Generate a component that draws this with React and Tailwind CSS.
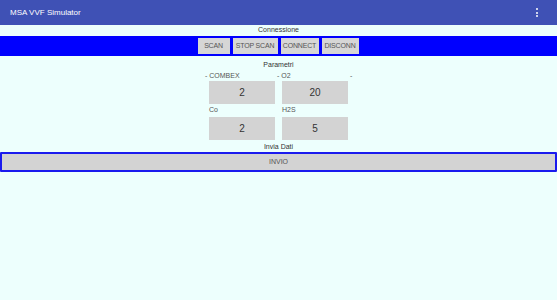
export default function App() {
  const font = { fontFamily: '"Liberation Sans", Arial, sans-serif' };
  const Btn = ({ children, w }) => (
    <div className={`h-[16px] ${w} bg-[#d6d6d6] flex items-center justify-center text-[7px] text-[#555] tracking-tight`}>
      {children}
    </div>
  );
  const Box = ({ children }) => (
    <div className="w-[66px] h-[23px] bg-[#d3d3d3] flex items-center justify-center text-[10px] text-[#333]">{children}</div>
  );
  return (
    <div className="w-[557px] h-[300px] bg-[#edfffd] flex flex-col" style={font}>
      <div className="h-[25px] bg-[#3f51b5] flex items-center justify-between pl-[10px] pr-[19px] shrink-0">
        <span className="text-white text-[8px]">MSA VVF Simulator</span>
        <div className="flex flex-col gap-[1.5px]">
          <div className="w-[2px] h-[2px] bg-white rounded-full" />
          <div className="w-[2px] h-[2px] bg-white rounded-full" />
          <div className="w-[2px] h-[2px] bg-white rounded-full" />
        </div>
      </div>
      <div className="h-[11px] flex items-center justify-center text-[7px] text-[#333]">Connessione</div>
      <div className="h-[20px] bg-[#0000ff] flex items-center justify-center gap-[3px] pr-[1px]">
        <Btn w="w-[32px]">SCAN</Btn>
        <Btn w="w-[45px]">STOP SCAN</Btn>
        <Btn w="w-[38px]">CONNECT</Btn>
        <Btn w="w-[37px]">DISCONN</Btn>
      </div>
      <div className="h-[16px] pt-[2px] flex items-center justify-center text-[7px] text-[#333]">Parametri</div>
      <div className="flex justify-center">
        <div className="w-[139px] flex flex-col text-[7px] text-[#555]">
          <div className="h-[9px] flex items-center whitespace-nowrap">
            <span className="w-[73px] shrink-0 -ml-[4px]">- COMBEX</span>
            <span className="w-[73px] shrink-0 -ml-[1px]">- O2</span>
            <span className="shrink-0">-</span>
          </div>
          <div className="flex gap-[7px]">
            <Box>2</Box>
            <Box>20</Box>
          </div>
          <div className="h-[13px] flex items-center">
            <span className="w-[73px]">Co</span>
            <span>H2S</span>
          </div>
          <div className="flex gap-[7px]">
            <Box>2</Box>
            <Box>5</Box>
          </div>
        </div>
      </div>
      <div className="h-[12px] pt-[3px] flex items-center justify-center text-[7px] text-[#333]">Invia Dati</div>
      <div className="h-[20px] border-2 border-[#1a1aee] bg-[#d3d3d3] flex items-center justify-center text-[7px] text-[#555] rounded-[1px]">INVIO</div>
    </div>
  );
}
